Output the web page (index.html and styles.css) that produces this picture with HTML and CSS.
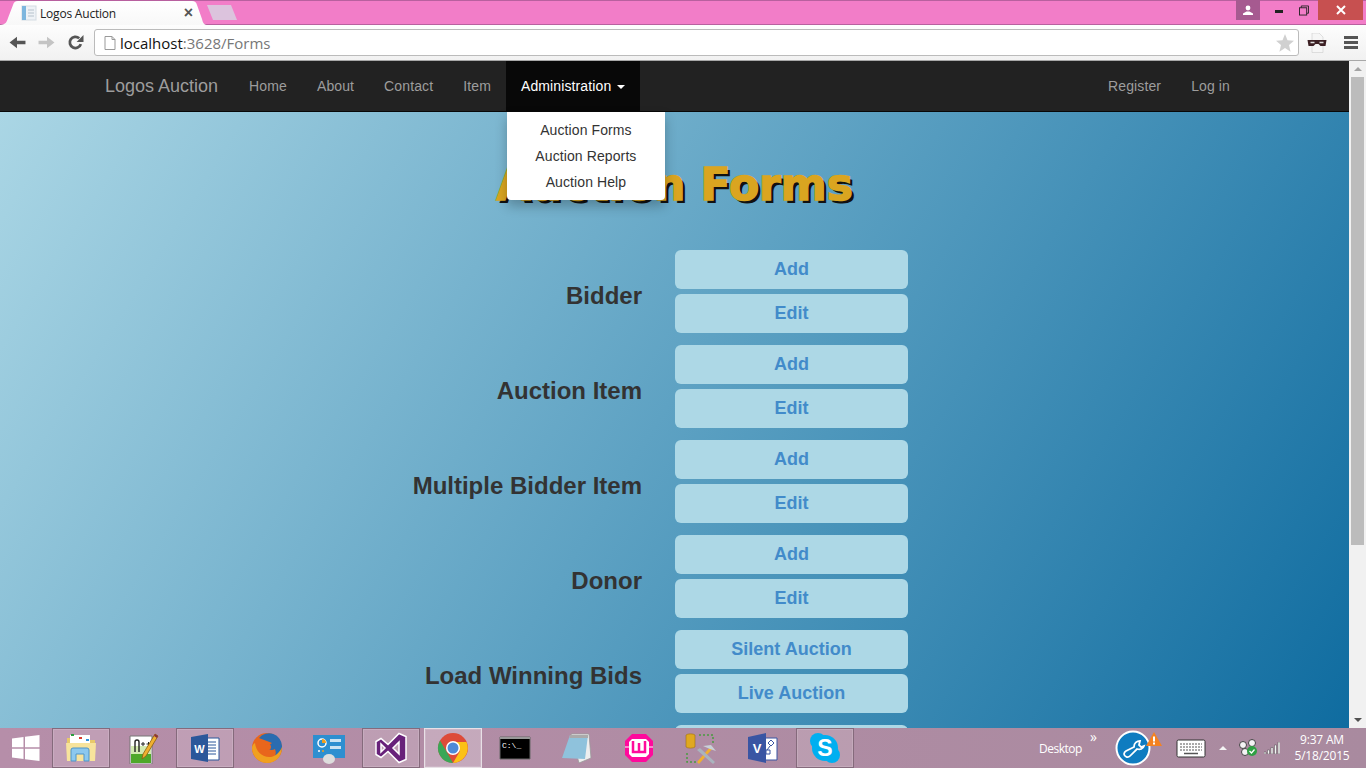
FILE: index.html
```html
<!DOCTYPE html>
<html lang="en">
<head>
    <meta charset="UTF-8">
    <title>Logos Auction</title>
    <link rel="stylesheet" href="styles.css">
</head>
<body>

    <!-- Browser tab strip -->
    <div class="tab-strip">
        <div class="tab">
            <svg class="tab-icon" viewBox="0 0 16 16"><rect x="1" y="1" width="14" height="14" fill="#eef2f6" stroke="#d3dbe2"/><rect x="1" y="1" width="4" height="14" fill="#7db6de"/><path d="M7 5h6M7 8h6M7 11h6" stroke="#b6c2cc"/></svg>
            <span class="tab-title">Logos Auction</span>
            <span class="tab-close">×</span>
        </div>
        <div class="new-tab"></div>
        <div class="window-controls">
            <div class="profile-btn"><svg viewBox="0 0 12 10" width="12" height="10"><circle cx="6" cy="3" r="2.400" fill="#fff"/><path d="M1 10V8.400L4.500 6.500h3L11 8.400V10z" fill="#fff"/></svg></div>
            <div class="min-btn"><span class="min-bar"></span></div>
            <div class="restore-btn"><svg viewBox="0 0 11 11" width="11" height="11"><rect x="0.500" y="2.500" width="8" height="8" fill="none" stroke="#222"/><path d="M2.500 2.500V.5h8v8h-2" fill="none" stroke="#222"/></svg></div>
            <div class="close-btn"><svg viewBox="0 0 10 10" width="10" height="10"><path d="M1 1l8 8M9 1l-8 8" stroke="#fff" stroke-width="2"/></svg></div>
        </div>
    </div>

    <!-- Browser toolbar -->
    <div class="toolbar">
        <svg class="tool-icon" viewBox="0 0 16 16"><path d="M15.500 6.300H7.500V2.500L.5 8l7 5.500V9.700h8z" fill="#555"/></svg>
        <svg class="tool-icon" viewBox="0 0 16 16"><path d="M.5 6.300h8V2.500l7 5.500-7 5.500V9.700h-8z" fill="#c4c4c4"/></svg>
        <svg class="tool-icon" viewBox="0 0 16 16"><path d="M13 9.500A5.300 5.300 0 1 1 11.500 4" fill="none" stroke="#555" stroke-width="2.600"/><path d="M9 7.500h6.500V1z" fill="#555"/></svg>
        <div class="omnibox">
            <svg class="page-icon" viewBox="0 0 12 14"><path d="M1 .5h7l3 3v10H1z" fill="#fff" stroke="#999"/><path d="M8 .5v3h3" fill="none" stroke="#999"/></svg>
            <span class="url-host">localhost</span><span class="url-rest">:3628/Forms</span>
            <svg class="star-icon" viewBox="0 0 18 18"><path d="M9 0l2.500 6.300 6.500.4-5 4.300 1.600 6.700L9 14.100l-5.600 3.600L5 11 0 6.700l6.500-.4z" fill="#d0d0d0"/></svg>
        </div>
        <svg class="mask-icon" viewBox="0 0 20 20"><path d="M5 0h7l4 4v15.500H5z" fill="#f6f6f6" stroke="#ccc" stroke-width=".6"/><path d="M.5 7h19l-1 6h-5l-2-2h-3l-2 2h-5z" fill="#3c2024"/><path d="M3.500 9.500h4M12.500 9.500h4" stroke="#ddd" stroke-width="1.400"/></svg>
        <div class="menu-icon"><span></span><span></span><span></span></div>
    </div>

    <div class="window-body">
        <div class="page">
            <!-- Navbar -->
            <nav class="navbar">
                <a class="brand">Logos Auction</a>
                <a class="nav-link">Home</a>
                <a class="nav-link">About</a>
                <a class="nav-link">Contact</a>
                <a class="nav-link">Item</a>
                <div class="nav-dropdown">
                    <a class="nav-link active">Administration <span class="caret"></span></a>
                    <div class="dropdown-menu">
                        <a>Auction Forms</a>
                        <a>Auction Reports</a>
                        <a>Auction Help</a>
                    </div>
                </div>
                <a class="nav-link push-right">Register</a>
                <a class="nav-link">Log in</a>
            </nav>

            <!-- Forms list -->
            <div class="content">
                <h1 class="page-title">Auction Forms</h1>
                <div class="form-row">
                    <h3>Bidder</h3>
                    <div class="btn-stack"><a class="form-btn">Add</a><a class="form-btn">Edit</a></div>
                </div>
                <div class="form-row">
                    <h3>Auction Item</h3>
                    <div class="btn-stack"><a class="form-btn">Add</a><a class="form-btn">Edit</a></div>
                </div>
                <div class="form-row">
                    <h3>Multiple Bidder Item</h3>
                    <div class="btn-stack"><a class="form-btn">Add</a><a class="form-btn">Edit</a></div>
                </div>
                <div class="form-row">
                    <h3>Donor</h3>
                    <div class="btn-stack"><a class="form-btn">Add</a><a class="form-btn">Edit</a></div>
                </div>
                <div class="form-row">
                    <h3>Load Winning Bids</h3>
                    <div class="btn-stack"><a class="form-btn">Silent Auction</a><a class="form-btn">Live Auction</a></div>
                </div>
                <div class="form-row">
                    <h3></h3>
                    <div class="btn-stack"><a class="form-btn"></a></div>
                </div>
            </div>
        </div>

        <!-- Scrollbar -->
        <div class="scrollbar">
            <span class="arrow-up"></span>
            <div class="scroll-track"><div class="scroll-thumb"></div></div>
            <span class="arrow-down"></span>
        </div>
    </div>

    <!-- Windows taskbar -->
    <div class="taskbar">
        <div class="start-btn">
            <svg viewBox="0 0 28 28" width="28" height="28"><path d="M0 4.500L11.500 3v10.300H0zM13 2.800L27.500 1v12.300H13zM0 14.800h11.500V25L0 23.500zM13 14.800h14.500V27L13 25.200z" fill="#fff"/></svg>
        </div>
        <div class="task-item open">
            <svg viewBox="0 0 32 32"><path d="M2 6h12l2 2h14v20H2z" fill="#e8c96a"/><path d="M5 3h20v8H5z" fill="#fff"/><path d="M6 2h3v2H6z" fill="#2a9d3f"/><path d="M14 5h3v2h-3z" fill="#d83b2e"/><path d="M21 7h3v2h-3z" fill="#2f8fdb"/><path d="M1 11h30l-1 18H2z" fill="#f7e39c"/><path d="M6 29v-11a2 2 0 0 1 2-2h14a2 2 0 0 1 2 2v11h-5v-7h-8v7z" fill="#8cc8ee" stroke="#4f94c8"/></svg>
        </div>
        <div class="task-item">
            <svg viewBox="0 0 32 32"><path d="M3 4h22v28H3z" fill="#fff" stroke="#777"/><path d="M4 22h20v9H4z" fill="#4fa82a"/><path d="M4 14h20v8H4z" fill="#d3eab0"/><path d="M8 20v-10q0-2 2-2t2 2v10" fill="none" stroke="#222" stroke-width="1.400"/><path d="M14 12h4M16 10v4M19.500 12h4M21.500 10v4" stroke="#222"/><path d="M28 2l3 2-12 20-4 3 1-5z" fill="#f0b030" stroke="#8a6010" stroke-width=".8"/><path d="M28 2l3 2-1 2-3-2z" fill="#8a3040"/></svg>
        </div>
        <div class="task-item open">
            <svg viewBox="0 0 32 32"><path d="M13 6h17v22H13z" fill="#fff" stroke="#2b579a"/><path d="M18 10h9M18 13h9M18 16h9M18 19h9M18 22h9" stroke="#2b579a"/><path d="M2 5l17-3v28L2 27z" fill="#2b579a"/><text x="10.500" y="20.500" class="icon-letter" font-size="11" text-anchor="middle">W</text></svg>
        </div>
        <div class="task-item">
            <svg viewBox="0 0 32 32"><circle cx="16" cy="16" r="15" fill="#e8661c"/><path d="M8 6a13 13 0 0 1 23 8c0 8-5 14-12 15 5-2 7-7 5-12-3 2-7 1-8-2l5-4c-4-2-9-3-13-5z" fill="#2a6cb0"/><path d="M4 11c1 9 8 15 16 14 5-1 9-5 11-10 0 9-6 16-15 16C8 31 1 24 1 16c0-2 1-4 3-5z" fill="#f0a020"/><circle cx="17" cy="15" r="3" fill="#e8661c"/></svg>
        </div>
        <div class="task-item">
            <svg viewBox="0 0 32 32"><path d="M0 3h32v23H0z" fill="#2d8fd0"/><circle cx="9" cy="11" r="4" fill="none" stroke="#fff" stroke-width="1.500"/><path d="M9 7a4 4 0 0 1 4 4H9z" fill="#f0a020"/><path d="M17 7h11v3H17zM17 14h11v3H17z" fill="#fff" opacity=".75"/><circle cx="6" cy="19" r="1" fill="#fff"/><circle cx="10" cy="19" r="1" fill="#f0a020"/><ellipse cx="16" cy="27" rx="6" ry="5" fill="#ddd"/></svg>
        </div>
        <div class="task-item open">
            <svg viewBox="0 0 32 32"><path fill-rule="evenodd" d="M24 1.500l7 3v23l-7 3-11-11-7 6-5-3v-13l5-3 7 6zM6 12v8l4-4zM24 10l-6 6 6 6z" fill="#68217a" stroke="#fff" stroke-width="1.500"/></svg>
        </div>
        <div class="task-item open current">
            <svg viewBox="0 0 32 32"><circle cx="16" cy="16" r="15" fill="#dd4b39"/><path d="M3 8.500l7 12L16 31A15 15 0 0 1 3 8.500z" fill="#3aa757"/><path d="M16 10h13.500A15 15 0 0 1 16 31l7-12z" fill="#fbc116"/><circle cx="16" cy="16" r="7" fill="#fff"/><circle cx="16" cy="16" r="5.500" fill="#4d8ad8"/></svg>
        </div>
        <div class="task-item">
            <svg viewBox="0 0 32 32"><path d="M1 5h30v22H1z" fill="#000" stroke="#666"/><path d="M1 5h30v2H1z" fill="#999"/><text x="3" y="16" class="icon-code" font-size="8">C:\_</text></svg>
        </div>
        <div class="task-item">
            <svg viewBox="0 0 32 32"><path d="M10 2h18l2 24-12 5z" fill="#eee" stroke="#999" stroke-width=".8"/><path d="M9 3h18l-3 24L1 26z" fill="#8fc2dc"/><path d="M9 3h18v3H8.500z" fill="#aaa"/></svg>
        </div>
        <div class="task-item">
            <svg viewBox="0 0 32 32"><path d="M9 2h14l7 7v14l-7 7H9l-7-7V9z" fill="#ff0a9c"/><path d="M9 7h14l3 3v12l-3 3H9l-3-3V10z" fill="#fff"/><path d="M10 9v11h12V9M16 11v9" fill="none" stroke="#ff0a9c" stroke-width="2.500"/><path d="M2 15h4M26 15h4" stroke="#fff"/></svg>
        </div>
        <div class="task-item">
            <svg viewBox="0 0 32 32"><path d="M1 3a5 2 0 0 1 9 0v12a5 2 0 0 1-9 0z" fill="#e0a820" stroke="#a07010" stroke-width=".6"/><path d="M14 3h14v10M2 21v9h12" fill="none" stroke="#4a9a40" stroke-width="1.500" stroke-dasharray="2 2"/><path d="M12 30l14-16 2 2-14 16z" fill="#f0b030"/><path d="M12 18l3-2 15 14-2 2z" fill="#aab4be"/><path d="M18 14l8-1 5 6-6-2z" fill="#c8d0d8"/></svg>
        </div>
        <div class="task-item">
            <svg viewBox="0 0 32 32"><path d="M15 6h15v22H15z" fill="#fff" stroke="#3955a3"/><path d="M24 8l3 3-3 3-3-3zM19 18h4v4h-4z" fill="#fff" stroke="#3955a3"/><path d="M23 14l-3 4" stroke="#3955a3"/><path d="M1 5l18-4v30L1 27z" fill="#3955a3"/><text x="10" y="21" class="icon-letter" font-size="13" text-anchor="middle">V</text></svg>
        </div>
        <div class="task-item open">
            <svg viewBox="0 0 32 32"><circle cx="9" cy="9" r="8" fill="#00aff0"/><circle cx="23" cy="23" r="8" fill="#00aff0"/><circle cx="16" cy="16" r="13" fill="#00aff0"/><text x="16" y="24" class="icon-letter" font-size="23" text-anchor="middle">S</text></svg>
        </div>

        <div class="tray">
            <span class="desktop-label">Desktop</span>
            <span class="chevrons">»</span>
            <div class="support-icon">
                <svg viewBox="0 0 36 36" width="36" height="36"><circle cx="18" cy="18" r="16.500" fill="#0f7cc0" stroke="#fff" stroke-width="2"/><path d="M9 24a3.500 3.500 0 0 0 6 2l7-7c3 1 6 0 7-3l-3 1-2-2 1-4c-3 0-6 2-6 6l-8 4a4 4 0 0 0-2 3z" fill="none" stroke="#fff" stroke-width="1.800"/></svg>
                <svg class="warn-icon" viewBox="0 0 16 14" width="16" height="14"><path d="M8 0l8 14H0z" fill="#f58220"/><path d="M7 4.500h2v5H7zM7 10.500h2v2H7z" fill="#fff"/></svg>
            </div>
            <svg class="keyboard" viewBox="0 0 30 19" width="30" height="19"><rect x="1" y="1" width="28" height="17" rx="1.500" fill="#fff" stroke="#333"/><path d="M4 5h22M4 8h22M4 11h22" stroke="#555" stroke-dasharray="2 1"/><path d="M8 14.500h14" stroke="#555" stroke-width="1.500"/></svg>
            <span class="tray-arrow"></span>
            <svg class="net-icon" viewBox="0 0 18 18" width="18" height="18"><circle cx="4" cy="6" r="3.500" fill="#f4f4f4" stroke="#444"/><circle cx="13" cy="4" r="3.500" fill="#f4f4f4" stroke="#444"/><circle cx="6" cy="13" r="3.500" fill="#f4f4f4" stroke="#444"/><circle cx="13" cy="12" r="5" fill="#2ea043"/><path d="M10.500 12l2 2 3-3.500" fill="none" stroke="#fff" stroke-width="1.300"/></svg>
            <svg class="signal-icon" viewBox="0 0 16 12" width="16" height="12"><path d="M0 10h2v2H0zM3.500 8h2v4h-2zM7 5.500h2V12H7zM10.500 3h2v9h-2zM14 0h2v12h-2z" fill="#f4f4f4" stroke="#333" stroke-width=".4"/></svg>
            <div class="clock"><span>9:37 AM</span><span>5/18/2015</span></div>
        </div>
    </div>

</body>
</html>
```

FILE: styles.css
```css
/* General Styling */
html, body {
    margin: 0;
    height: 100%;
}

body {
    width: 1366px;
    height: 768px;
    overflow: hidden;
    display: flex;
    flex-direction: column;
    font-family: "Liberation Sans", Arial, sans-serif;
    font-size: 14px;
    color: #333;
}

a {
    text-decoration: none;
}

/* Tab Strip */
.tab-strip {
    height: 25px;
    flex: none;
    display: flex;
    align-items: flex-end;
    background-color: #f27dc8;
    box-shadow: inset 0 -1px 0 #b8609f, inset 0 1px 0 #b8609f;
    box-sizing: border-box;
}

.tab {
    width: 208px;
    height: 24px;
    display: flex;
    align-items: center;
    box-sizing: border-box;
    padding: 0 14px 0 21px;
    background: linear-gradient(#fff, #f8f8f8);
    clip-path: path("M0 24 C6 24 7 20 8 17 L13 4 C14 1 15 0 18 0 L192 0 C195 0 196 1 197 4 L202 18 C203 22 204 24 208 24 Z");
}

.tab-icon {
    width: 16px;
    height: 16px;
    flex: none;
}

.tab-title {
    flex: 1;
    margin-left: 3px;
    font-family: "Open Sans", sans-serif;
    font-size: 12px;
    letter-spacing: -0.2px;
    color: #222;
}

.tab-close {
    margin-right: 1px;
    font-size: 16px;
    font-weight: bold;
    color: #555;
}

.new-tab {
    width: 30px;
    height: 15px;
    margin: 0 0 5px -1px;
    background-color: #dcc3dd;
    clip-path: polygon(0 0, 24px 0, 30px 15px, 6px 15px);
}

.window-controls {
    margin-left: auto;
    margin-bottom: 5px;
    height: 20px;
    display: flex;
    align-self: flex-start;
}

.window-controls > div {
    display: flex;
    align-items: center;
    justify-content: center;
}

.profile-btn {
    width: 24px;
    background-color: #a65a90;
}

.min-btn {
    width: 38px;
}

.min-bar {
    width: 8px;
    height: 3px;
    margin-top: 3px;
    background-color: #222;
}

.restore-btn {
    width: 10px;
    margin: 0 9px 0 1px;
}

.close-btn {
    width: 45px;
    margin-right: 3px;
    background-color: #c75050;
}

/* Toolbar */
.toolbar {
    height: 36px;
    flex: none;
    box-sizing: border-box;
    display: flex;
    align-items: center;
    padding: 0 8px 0 9px;
    background: linear-gradient(#fdfdfd, #f1f1f1);
    border-bottom: 1px solid #a8a8a8;
}

.tool-icon {
    width: 17px;
    height: 17px;
    margin-right: 12px;
    flex: none;
}

.omnibox {
    width: 1205px;
    height: 27px;
    flex: none;
    margin-left: -2px;
    box-sizing: border-box;
    display: flex;
    align-items: center;
    padding: 0 4px 0 9px;
    background-color: #fff;
    border: 1px solid #bbb;
    border-radius: 3px;
    font-family: "Open Sans", sans-serif;
    font-size: 15px;
}

.page-icon {
    width: 12px;
    height: 14px;
    margin-right: 4px;
}

.url-host {
    color: #111;
}

.url-rest {
    color: #777;
}

.star-icon {
    width: 18px;
    height: 18px;
    margin-left: auto;
}

.mask-icon {
    width: 20px;
    height: 20px;
    margin-left: 8px;
}

.menu-icon {
    margin-left: 17px;
    width: 14px;
    display: flex;
    flex-direction: column;
    gap: 2px;
}

.menu-icon span {
    height: 3px;
    background-color: #555;
}

/* Page and Scrollbar */
.window-body {
    flex: 1;
    min-height: 0;
    display: flex;
}

.page {
    flex: 1;
    display: flex;
    flex-direction: column;
    min-width: 0;
    background: linear-gradient(122deg, #add8e6, #0f6ca0);
}

.scrollbar {
    width: 17px;
    flex: none;
    display: flex;
    flex-direction: column;
    align-items: center;
    background-color: #f1f1f1;
}

.arrow-up, .arrow-down {
    width: 0;
    height: 0;
    margin: 6px 0;
    border-left: 4px solid transparent;
    border-right: 4px solid transparent;
}

.arrow-up {
    border-bottom: 4px solid #a3a3a3;
}

.arrow-down {
    border-top: 4px solid #505050;
}

.scroll-track {
    flex: 1;
    width: 100%;
}

.scroll-thumb {
    width: 13px;
    height: 468px;
    margin: 0 auto;
    background-color: #bcbcbc;
}

/* Navbar */
.navbar {
    height: 51px;
    flex: none;
    box-sizing: border-box;
    display: flex;
    padding: 0 104px 0 90px;
    background-color: #222;
    border-bottom: 1px solid #080808;
}

.brand {
    padding: 15px;
    margin-right: 1px;
    font-size: 18px;
    line-height: 20px;
    color: #9d9d9d;
}

.nav-link {
    display: block;
    padding: 15px;
    line-height: 20px;
    letter-spacing: 0.12px;
    color: #9d9d9d;
}

.nav-link.active {
    color: #fff;
    background-color: #080808;
}

.push-right {
    margin-left: auto;
}

.caret {
    display: inline-block;
    margin-left: 2px;
    vertical-align: middle;
    border-top: 4px solid #fff;
    border-left: 4px solid transparent;
    border-right: 4px solid transparent;
}

.nav-dropdown {
    position: relative;
}

.dropdown-menu {
    position: absolute;
    top: 51px;
    left: 1px;
    width: 158px;
    height: 88px;
    box-sizing: border-box;
    padding: 5px 0;
    display: flex;
    flex-direction: column;
    background-color: #fff;
    border-radius: 0 0 4px 4px;
    box-shadow: 0 6px 12px rgba(0, 0, 0, 0.25);
    text-align: center;
    z-index: 2;
}

.dropdown-menu a {
    line-height: 26px;
    letter-spacing: 0.1px;
    color: #333;
}

/* Content */
.content {
    flex: 1;
    min-height: 0;
    overflow: hidden;
}

.page-title {
    margin: 45px 0 38px;
    height: 55px;
    line-height: 55px;
    text-align: center;
    font-family: "DejaVu Sans", sans-serif;
    font-size: 44px;
    font-weight: bold;
    color: #daa520;
    -webkit-text-stroke: 1.5px #daa520;
    text-shadow: 3px 3px 0 #111;
}

.form-row {
    display: grid;
    grid-template-columns: 642px 233px;
    column-gap: 33px;
    align-items: center;
    margin-bottom: 12px;
}

.form-row h3 {
    margin: 8px 0 0;
    text-align: right;
    font-size: 24px;
    font-weight: bold;
    color: #333;
}

.btn-stack {
    display: flex;
    flex-direction: column;
    gap: 5px;
}

.form-btn {
    height: 39px;
    line-height: 38px;
    text-align: center;
    font-size: 18px;
    font-weight: bold;
    color: #428bca;
    background-color: #add8e6;
    border-radius: 6px;
}

/* Taskbar */
.taskbar {
    height: 40px;
    flex: none;
    display: flex;
    align-items: stretch;
    background: linear-gradient(to right, #b68ea9, #a98a9f);
    color: #fff;
    font-family: "Open Sans", sans-serif;
    font-size: 12px;
}

.start-btn {
    width: 52px;
    display: flex;
    align-items: center;
    justify-content: center;
    flex: none;
}

.task-item {
    width: 58px;
    margin-right: 4px;
    flex: none;
    box-sizing: border-box;
    display: flex;
    align-items: center;
    justify-content: center;
    border: 1px solid transparent;
}

.task-item svg {
    width: 32px;
    height: 32px;
}

.task-item.open {
    border-color: #856a7c;
    background-color: rgba(255, 255, 255, 0.15);
    box-shadow: inset 0 0 0 1px rgba(255, 255, 255, 0.15);
}

.task-item.current {
    border-color: #e8e0e6;
    background-color: rgba(255, 255, 255, 0.25);
}

.icon-letter {
    font-family: "Liberation Sans", sans-serif;
    font-weight: bold;
    fill: #fff;
}

.icon-code {
    font-family: "Liberation Mono", monospace;
    fill: #fff;
}

.tray {
    margin-left: auto;
    display: flex;
    align-items: center;
    padding-right: 13px;
}

.desktop-label {
    width: 43px;
    letter-spacing: -0.5px;
}

.chevrons {
    align-self: flex-start;
    width: 26px;
    margin-left: 8px;
    font-size: 14px;
    line-height: 18px;
}

.support-icon {
    position: relative;
    width: 36px;
    height: 36px;
    margin-left: -1px;
}

.warn-icon {
    position: absolute;
    top: 2px;
    right: -11px;
}

.keyboard {
    margin-left: 25px;
}

.tray-arrow {
    width: 0;
    height: 0;
    margin-left: 13px;
    border-left: 4px solid transparent;
    border-right: 4px solid transparent;
    border-bottom: 4px solid #f4f4f4;
}

.net-icon {
    margin-left: 12px;
}

.signal-icon {
    margin-left: 7px;
}

.clock {
    width: 62px;
    margin-left: 11px;
    display: flex;
    flex-direction: column;
    align-items: center;
    line-height: 16px;
    letter-spacing: -0.2px;
}
```
